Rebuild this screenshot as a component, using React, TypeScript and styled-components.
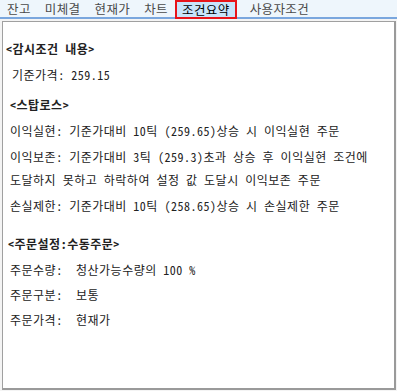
import styled, { createGlobalStyle } from 'styled-components'

const GlobalStyle = createGlobalStyle`
  html, body {
    margin: 0;
    padding: 0;
    background: #FFF;
  }
  body {
    font-family: "Noto Sans Mono CJK KR", "Noto Sans CJK KR", "DejaVu Sans", sans-serif;
    font-size: 12px;
    color: #222;
  }
`

const Page = styled.div`
  width: 397px;
  height: 391px;
  display: flex;
  flex-direction: column;
  background: #F4F4F4;
`

const TabBar = styled.div`
  height: 17px;
  background: #EEF6FC;
  border-bottom: 2px solid #7AA7DE;
  display: flex;
  align-items: stretch;
  padding-left: 0;
`

const Tab = styled.div<{ active?: boolean }>`
  box-sizing: border-box;
  height: ${(p) => (p.active ? '19px' : '17px')};
  margin-bottom: ${(p) => (p.active ? '-2px' : '0')};
  margin-right: ${(p) => (p.active ? '6px' : '0')};
  padding: 0 ${(p) => (p.active ? '5px' : '7px')};
  line-height: ${(p) => (p.active ? '15px' : '17px')};
  font-family: "Noto Sans CJK KR", sans-serif;
  font-size: 12.5px;
  letter-spacing: 0.4px;
  color: ${(p) => (p.active ? '#000' : '#4A4A4A')};
  background: ${(p) => (p.active ? '#C8E4FA' : 'transparent')};
  border: ${(p) => (p.active ? '2px solid #E8141A' : 'none')};
`

const Panel = styled.div`
  flex: 1;
  margin: 2px 1px 1px 2px;
  background: #FFF;
  border-top: 1px solid #A0A0A0;
  border-left: 1px solid #A0A0A0;
  border-right: 2px solid #9A9A9A;
  border-bottom: 2px solid #9A9A9A;
  display: flex;
  flex-direction: column;
  padding: 17px 0 0 2px;
  letter-spacing: 0.5px;
`

const Heading = styled.div<{ indent?: number; gap?: number }>`
  font-weight: bold;
  height: 20px;
  line-height: 20px;
  padding-left: ${(p) => p.indent ?? 0}px;
  margin-top: ${(p) => p.gap ?? 0}px;
  margin-bottom: 6px;
  color: #222;
`

const Line = styled.div<{ indent?: number }>`
  height: 20px;
  line-height: 20px;
  padding-left: ${(p) => p.indent ?? 6}px;
  margin-bottom: 6px;
  white-space: nowrap;
`

const WrapLine = styled(Line)`
  margin-bottom: 3px;
`

const Field = styled.div`
  display: flex;
  height: 20px;
  line-height: 20px;
  padding-left: 5px;
  margin-bottom: 5px;
`

const Label = styled.span`
  width: 66px;
`

const tabs = ['잔고', '미체결', '현재가', '차트', '조건요약', '사용자조건']

export default function App() {
  return (
    <>
      <GlobalStyle />
      <Page>
        <TabBar>
          {tabs.map((t) => (
            <Tab key={t} active={t === '조건요약'}>
              {t}
            </Tab>
          ))}
        </TabBar>
        <Panel>
          <Heading indent={1}>&lt;감시조건 내용&gt;</Heading>
          <Line indent={7}>기준가격: 259.15</Line>

          <Heading indent={5} gap={4}>&lt;스탑로스&gt;</Heading>
          <Line indent={5}>이익실현: 기준가대비 10틱 (259.65)상승 시 이익실현 주문</Line>
          <WrapLine indent={5}>이익보존: 기준가대비 3틱 (259.3)초과 상승 후 이익실현 조건에</WrapLine>
          <Line indent={5}>도달하지 못하고 하락하여 설정 값 도달시 이익보존 주문</Line>
          <Line indent={5}>손실제한: 기준가대비 10틱 (258.65)상승 시 손실제한 주문</Line>

          <Heading indent={3} gap={12}>&lt;주문설정:수동주문&gt;</Heading>
          <Field>
            <Label>주문수량:</Label>
            <span>청산가능수량의 100 %</span>
          </Field>
          <Field>
            <Label>주문구분:</Label>
            <span>보통</span>
          </Field>
          <Field>
            <Label>주문가격:</Label>
            <span>현재가</span>
          </Field>
        </Panel>
      </Page>
    </>
  )
}
